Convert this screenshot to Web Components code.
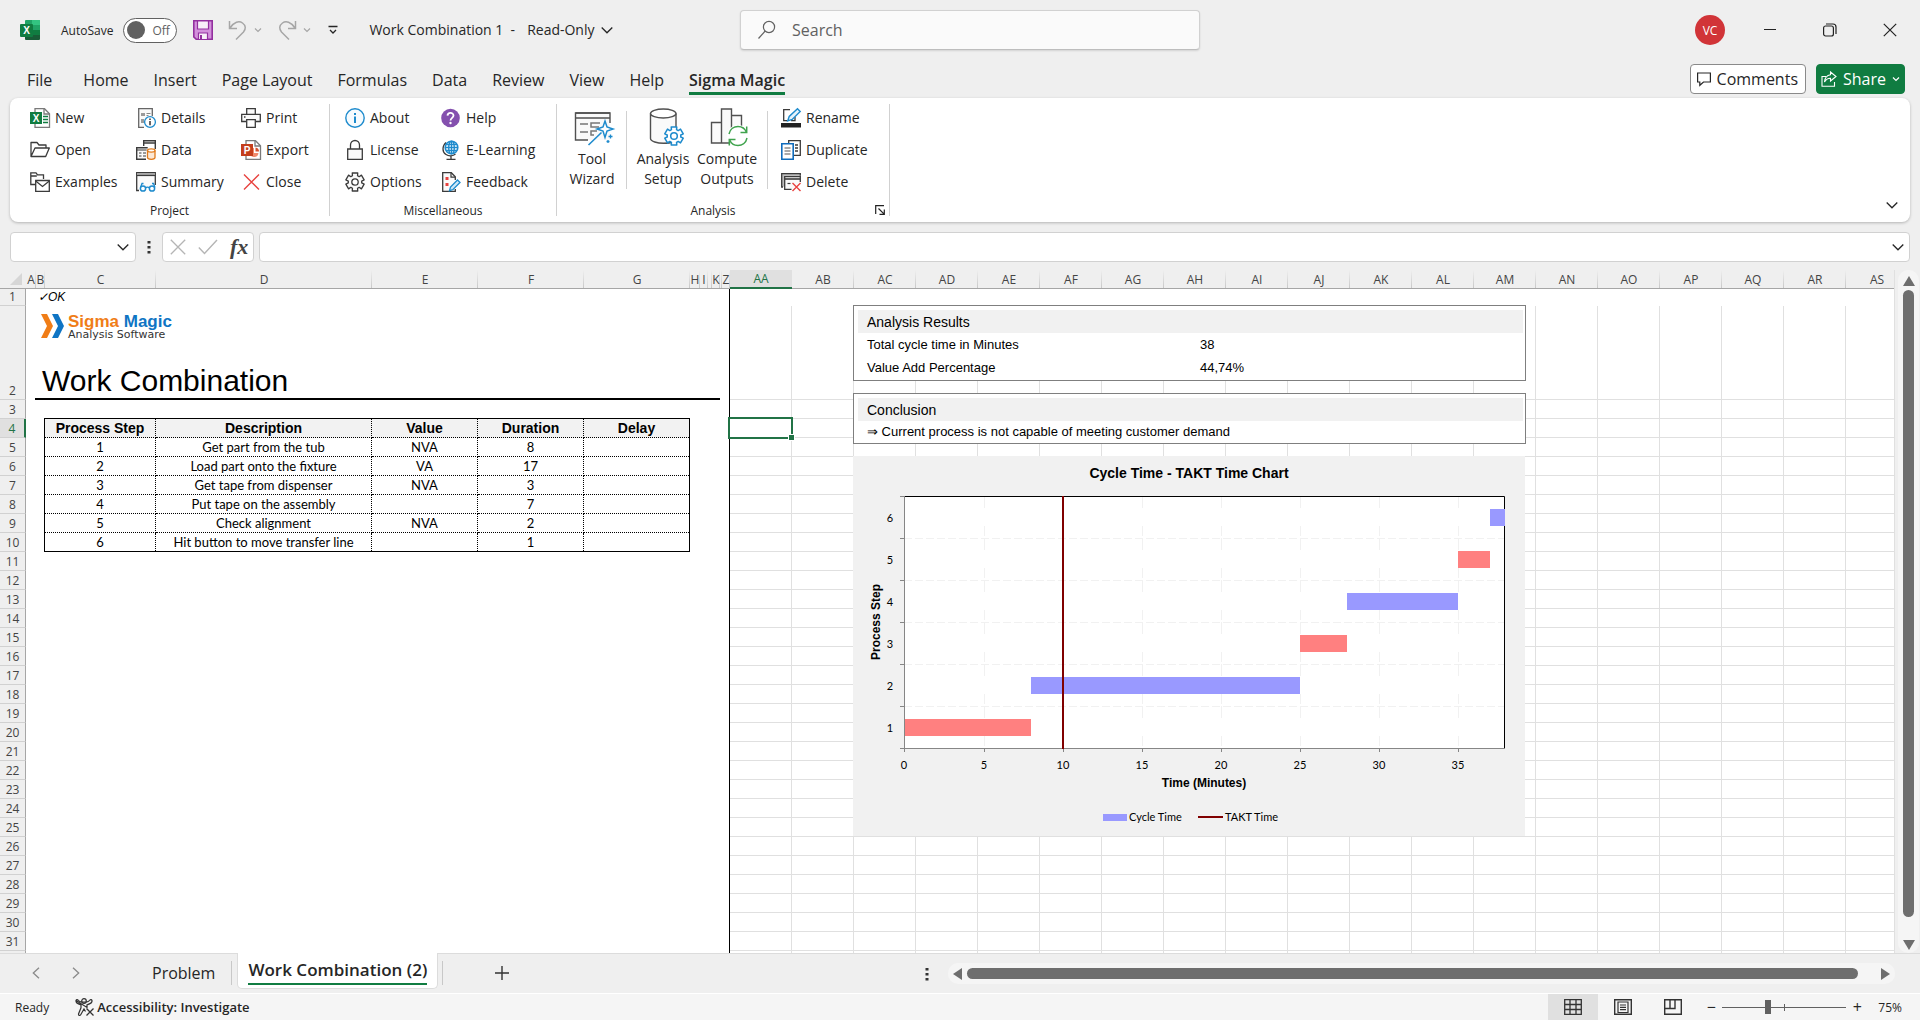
<!DOCTYPE html>
<html lang="en">
<head>
<meta charset="utf-8">
<title>Work Combination 1 - Read-Only</title>
<style>
    :root {
        --font-ui: "Open Sans", "Noto Sans", sans-serif;
        --font-cell: Lato, "Open Sans", sans-serif;
        --font-report: "Liberation Sans", Arial, sans-serif;
        --color-text: #262626;
        --color-muted: #616161;
        --color-line: #d1d1d1;
        --color-grid: #e0e0e0;
        --color-chrome: #efefef;
        --color-green: #107c41;
        --color-select: #217346;
    }

    body {
        margin: 0;
        display: grid;
        grid-template-rows: auto auto auto auto minmax(0, 1fr) auto auto;
        height: 100vh;
        background: var(--color-chrome);
        color: var(--color-text);
        font-family: var(--font-ui);
        font-size: 14px;
    }
</style>
</head>
<body>
<title-bar></title-bar>
<ribbon-tabs active="Sigma Magic"></ribbon-tabs>
<ribbon-bar></ribbon-bar>
<formula-bar></formula-bar>
<work-sheet></work-sheet>
<sheet-tabs></sheet-tabs>
<status-bar></status-bar>

<script>
// Shared reset for the controls, repeated in each shadow root that has buttons
const controls = `
    button, input {
        font: inherit;
        color: inherit;
        margin: 0;
        padding: 0;
        border: 0;
        background: none;
        outline: none;
    }
    button { display: flex; align-items: center; justify-content: center; }
`;

class BaseElement extends HTMLElement {
  constructor() {
    super();
    this.attachShadow({ mode: "open" });
  }

  connectedCallback() {
    const template = document.createElement("template");
    template.innerHTML = this.render();
    this.shadowRoot.replaceChildren(template.content.cloneNode(true));
  }
}

const INK = "#3b3b3b";
const BLUE = "#1e8bcd";

const gear = (cx, cy, r) => {
  const points = [];
  for (let i = 0; i < 6; i++) {
    [[-17, 1], [17, 1], [22, 0.72], [38, 0.72]].forEach(([deg, k]) => {
      const a = ((i * 60 + deg - 90) * Math.PI) / 180;
      points.push(`${(cx + r * k * Math.cos(a)).toFixed(2)} ${(cy + r * k * Math.sin(a)).toFixed(2)}`);
    });
  }
  return `M${points.join("L")}Z`;
};

// name: [width, height, markup]
const icons = {
  excel: [20, 20, `<path d="M6 0h13a1 1 0 0 1 1 1v5H5V1a1 1 0 0 1 1-1z" fill="#21a366"/><path d="M12 0h7a1 1 0 0 1 1 1v4h-8z" fill="#33c481"/><path d="M5 5h7v10H5z" fill="#185c37"/><path d="M12 5h8v5h-8z" fill="#21a366"/><path d="M12 10h8v5h-8z" fill="#107c41"/><path d="M5 15h15v4a1 1 0 0 1-1 1H6a1 1 0 0 1-1-1z" fill="#185c37"/><rect y="4" width="13" height="13" rx="1" fill="#107c41"/><text x="6.5" y="14" font-size="10" font-weight="700" text-anchor="middle" fill="#fff">X</text>`],
  save: [20, 20, `<path d="M.8.8h18.4v18.4H3.2L.8 16.8z" fill="#d391dc" stroke="#93309f" stroke-width="1.6"/><path d="M4.5 1h11v8h-11z" fill="#f8f0f9" stroke="#93309f" stroke-width="1.2"/><path d="M5.5 19v-6h9v6" fill="#f8f0f9" stroke="#93309f" stroke-width="1.2"/><path d="M8 15v4" stroke="#93309f" stroke-width="2"/>`],
  undo: [20, 20, `<path d="M1.500 1v7.500h7.500M2 8C6 2 11 .5 14.500 3c3.500 2.500 3.500 6 1 9L8 19.500" fill="none" stroke="#a6a6a6" stroke-width="1.500"/>`],
  redo: [20, 20, `<path d="M18.500 1v7.500H11M18 8C14 2 9 .5 5.500 3 2 5.500 2 9 4.500 12l7.500 7.500" fill="none" stroke="#a6a6a6" stroke-width="1.500"/>`],
  chevronSmall: [8, 8, `<path d="M1 2.500l3 3 3-3" fill="none" stroke="currentColor" stroke-width="1.200"/>`],
  chevron: [12, 12, `<path d="M.7 3.500L6 8.800l5.300-5.300" fill="none" stroke="currentColor" stroke-width="1.300"/>`],
  customize: [10, 10, `<path d="M.5 1.500h9M2 5l3 3 3-3" fill="none" stroke="currentColor" stroke-width="1.300"/>`],
  search: [20, 20, `<circle cx="12" cy="7" r="5.600" fill="none" stroke="#616161" stroke-width="1.200"/><path d="M8.200 11L1.500 18.500" stroke="#616161" stroke-width="1.200"/>`],
  minimize: [12, 12, `<path d="M0 5.500h12" stroke="#222" stroke-width="1"/>`],
  restore: [14, 14, `<rect x=".6" y="3" width="9.800" height="10" rx="2" fill="none" stroke="#222" stroke-width="1.200"/><path d="M3 1h7a3 3 0 0 1 3 3v7" fill="none" stroke="#222" stroke-width="1.200"/>`],
  close: [14, 14, `<path d="M.8.8l12.400 12.400M13.200.8L.8 13.200" stroke="#222" stroke-width="1.200"/>`],
  comment: [14, 14, `<path d="M.6 1h12.800v9H6.500L2.800 13.300V10H.6z" fill="none" stroke="#262626" stroke-width="1.200"/>`],
  share: [16, 16, `<path d="M5 5.500H1v9.800h12.500V11" fill="none" stroke="#fff" stroke-width="1.100"/><path d="M9.500 1l5.500 4.500L9.500 10V7.300C6.500 7.200 5 8.500 3.500 11c.3-4.500 2.700-6.800 6-7.300z" fill="none" stroke="#fff" stroke-width="1.100"/>`],
  new: [20, 20, `<path d="M5 .7h9.500l5 5v13.600H5z" fill="#fff" stroke="#7a7a7a" stroke-width="1.300"/><path d="M14 1v5h5" fill="none" stroke="#7a7a7a" stroke-width="1.300"/><path d="M13 8.500h5M13 11.500h5M13 14.500h5" stroke="#107c41" stroke-width="1.500"/><rect y="4" width="12" height="12" fill="#107c41"/><text x="6" y="13.500" font-size="10" font-weight="700" text-anchor="middle" fill="#fff">X</text>`],
  open: [20, 20, `<path d="M1 16.500V2.500h6l2 2.500h7v3M1 16.500L5 8h14.300l-3.600 8.500z" fill="none" stroke="${INK}" stroke-width="1.300" stroke-linejoin="round"/>`],
  examples: [20, 20, `<path d="M6 12.500H.8V.8H6l1.500 2h6V7M.8 4h6" fill="none" stroke="${INK}" stroke-width="1.300"/><path d="M5.700 8.500h13.600v10.800H5.700z" fill="#fff" stroke="${INK}" stroke-width="1.300"/><path d="M5.700 9l6.800 5.500L19.300 9" fill="none" stroke="${INK}" stroke-width="1.300"/>`],
  details: [20, 20, `<path d="M8 19.300H2.700V.7h13.600V8" fill="#fafafa" stroke="#666" stroke-width="1.300"/><path d="M5 5h4v3H5zM5 11h3v4H5z" fill="#9a9a9a"/><path d="M10.500 5.500h4M10.500 7.500h2" stroke="#888"/><circle cx="14" cy="14" r="5.400" fill="#fff" stroke="${BLUE}" stroke-width="1.300"/><path d="M14 13v4.200M14 10.600v1.400" stroke="#333" stroke-width="1.500"/>`],
  data: [20, 20, `<path d="M7.700 6V.7h11.600V9M7.700 3h11.600" fill="none" stroke="${INK}" stroke-width="1.400"/><path d="M10 19.300H.7V7.700h11" fill="#fafafa" stroke="${INK}" stroke-width="1.400"/><path d="M.7 10h10M3 13h2.500M3 16h2.500M7 13h3M7 16h3" stroke="${INK}" stroke-width="1.200"/><path d="M11.500 10.500v7c0 2.400 7.500 2.400 7.500 0v-7" fill="#fce8d6" stroke="#e07b1c" stroke-width="1.300"/><ellipse cx="15.250" cy="10.500" rx="3.750" ry="1.600" fill="#fff" stroke="#e07b1c" stroke-width="1.300"/>`],
  summary: [20, 20, `<path d="M3 18.500H.7V.7h18.600V13" fill="#fafafa" stroke="${INK}" stroke-width="1.300"/><path d="M1.300 2h17.400" stroke="#a8a8a8" stroke-width="2"/><path d="M.7 3.500h18.600" stroke="${INK}" stroke-width="1.200"/><path d="M4.500 15.500l1.500-4h1.500M19 15.500l-1.500-4H16M9.500 16c1-1 3-1 4 0" fill="none" stroke="${BLUE}" stroke-width="1.300"/><circle cx="7" cy="16.500" r="2.600" fill="#fff" stroke="${BLUE}" stroke-width="1.500"/><circle cx="16" cy="16.500" r="2.600" fill="#fff" stroke="${BLUE}" stroke-width="1.500"/>`],
  print: [20, 20, `<path d="M5.700 6V.7h8.600V6M5 13.500H.7V6.300h18.600v7.200H15" fill="#fafafa" stroke="${INK}" stroke-width="1.300"/><path d="M3 9h1.500" stroke="${INK}" stroke-width="1.300"/><path d="M5.700 11.700h8.600v7.600H5.700z" fill="#fff" stroke="${INK}" stroke-width="1.300"/>`],
  export: [20, 20, `<path d="M5 .7h9.500l5 5v13.600H5z" fill="#fff" stroke="#7a7a7a" stroke-width="1.300"/><path d="M14 1v5h5" fill="none" stroke="#7a7a7a" stroke-width="1.300"/><path d="M13 8a4.500 4.500 0 1 0 4.500 5H13z" fill="#f08a6c"/><path d="M14.500 7.500v4h3.500a4 4 0 0 0-3.500-4z" fill="#d35230"/><rect y="4" width="12" height="12" fill="#c43e1c"/><text x="6" y="13.500" font-size="10" font-weight="700" text-anchor="middle" fill="#fff">P</text>`],
  cross: [20, 20, `<path d="M3 2.500l15 15M18 2.500l-15 15" stroke="#e8423f" stroke-width="1.400"/>`],
  about: [20, 20, `<circle cx="10" cy="10" r="9.200" fill="#f6fbfe" stroke="${BLUE}" stroke-width="1.400"/><path d="M10 8.500v6.500M10 5v2" stroke="${BLUE}" stroke-width="2"/>`],
  help: [20, 20, `<circle cx="9.500" cy="10" r="9.300" fill="#8450ae"/><path d="M6.500 7.600c.2-3.600 6-3.600 6 0 0 2.200-3 2.400-3 5" fill="none" stroke="#fff" stroke-width="1.800"/><circle cx="9.500" cy="15" r="1.200" fill="#fff"/>`],
  license: [20, 20, `<path d="M5.500 9V5a4.500 4.500 0 0 1 9 0v4" fill="none" stroke="${INK}" stroke-width="1.300"/><path d="M2.700 9h14.600v10.300H2.700z" fill="#fafafa" stroke="${INK}" stroke-width="1.300"/>`],
  learning: [20, 20, `<path d="M5 2.500C1 6 1 12 5 14.500c3 2 7 1.500 9.500-.5M10 16v3M5.500 19.300h9" fill="none" stroke="${INK}" stroke-width="1.300"/><circle cx="10.500" cy="7.500" r="6.300" fill="#fff" stroke="${BLUE}" stroke-width="1.600"/><ellipse cx="10.500" cy="7.500" rx="2.800" ry="6.300" fill="none" stroke="${BLUE}" stroke-width="1.400"/><path d="M4.200 7.500h12.600M5 4.500h11M5 10.500h11M10.500 1v13" stroke="${BLUE}" stroke-width="1.300"/>`],
  options: [20, 20, `<path d="${gear(10, 10, 9.4)}" fill="#fafafa" stroke="${INK}" stroke-width="1.300" stroke-linejoin="round"/><circle cx="10" cy="10" r="3.200" fill="#fff" stroke="${INK}" stroke-width="1.300"/>`],
  feedback: [20, 20, `<path d="M14.300 17v2.300H1.700V.7h8.600l4 4V8" fill="#fafafa" stroke="${INK}" stroke-width="1.300"/><path d="M10 .7v4.500h4" fill="none" stroke="${INK}" stroke-width="1.200"/><path d="M4.500 5h3v3h-3zM4.500 11h3v3h-3z" fill="#e8423f"/><path d="M16.500 8l2.500 2.500-7 7-3.500 1.200 1-3.700z" fill="#cfe8f8" stroke="${BLUE}" stroke-width="1.300"/>`],
  rename: [20, 20, `<path d="M9 1.700H2.700v11h3.500M14 9v3.700h-4" fill="none" stroke="${INK}" stroke-width="1.300"/><path d="M16.500.8l2.700 2.700-8 8-4.500 1.500 1.500-4.500z" fill="#e6f3fb" stroke="${BLUE}" stroke-width="1.400"/><path d="M0 15h20v4.500H0z" fill="#222"/>`],
  duplicate: [20, 20, `<path d="M7.700 3V.7h11.600v14.600H13M14 5h3M14 8h3M14 11h3" fill="none" stroke="${INK}" stroke-width="1.300"/><path d="M.8 3.700h11.400v15.500H.8z" fill="#fff" stroke="#0f6cbd" stroke-width="1.600"/><path d="M3.500 8h6M3.500 11h6M3.500 14h6" stroke="#555" stroke-width="1.200"/>`],
  delete: [20, 20, `<path d="M2 15H.7V1.700h18.600v2" fill="#bdbdbd" stroke="${INK}" stroke-width="1.300"/><path d="M10.500 17.300H3.700V4.700h15.600V10" fill="#fafafa" stroke="${INK}" stroke-width="1.300"/><path d="M4 7h15" stroke="${INK}" stroke-width="1.600"/><path d="M6.500 11.500h3" stroke="${INK}" stroke-width="1.200"/><path d="M11.500 11l8 8M19.500 11l-8 8" stroke="#e8423f" stroke-width="1.400"/>`],
  wizard: [40, 40, `<path d="M3.500 7h34.500v27H3.500z" fill="#fafafa"/><path d="M16 34H3.500V7H38v10" fill="none" stroke="#505050" stroke-width="1.400"/><path d="M3.500 12H38M3.500 7H38" stroke="#505050" stroke-width="1.400"/><path d="M8 18h8M8 26h8" stroke="#777" stroke-width="1.500"/><path d="M28 17h-9v4h8M25 25h-6v4h3" fill="none" stroke="#777" stroke-width="1.500"/><path d="M29.500 26.500L16.500 39" stroke="${BLUE}" stroke-width="1.600"/><path d="M33 15l2 6 6 2-6 2-2 6.500-2-6.500-6-2 6-2z" fill="#fff" stroke="${BLUE}" stroke-width="1.500"/><path d="M38.500 28.500v4M36.500 30.500h4M36 34v3M34.500 35.500h3" stroke="${BLUE}" stroke-width="1.300"/>`],
  setup: [40, 40, `<path d="M7.500 7.500v25c0 3 7 4.800 13 4.800 8 0 12.500-2 12.500-4.800v-25" fill="#fafafa" stroke="#505050" stroke-width="1.400"/><ellipse cx="20.250" cy="7.500" rx="12.750" ry="4.500" fill="#fff" stroke="#505050" stroke-width="1.400"/><path d="${gear(31, 30, 9.5)}" fill="#fff" stroke="${BLUE}" stroke-width="1.500" stroke-linejoin="round"/><circle cx="31" cy="30" r="3.300" fill="none" stroke="${BLUE}" stroke-width="1.500"/>`],
  compute: [40, 40, `<path d="M4.500 16.500h10v20.500h-10zM24.500 9.500h10V37h-10zM14.500 3h10v34h-10z" fill="#fafafa" stroke="#505050" stroke-width="1.400"/><circle cx="31" cy="30" r="11" fill="#fff"/><path d="M22 28c1-5 5-7.500 9-7.500 3.500 0 7 2 8.500 6M40 32c-1 5-5 7.500-9 7.500-3.500 0-7-2-8.500-6" fill="none" stroke="#3fa34d" stroke-width="1.500"/><path d="M39.700 20.500v6H33.500M22.300 39.500v-6h6.200" fill="none" stroke="#3fa34d" stroke-width="1.500"/>`],
  launcher: [10, 10, `<path d="M.7 9V.7H9M3.500 3.500l5.200 5.200M9.300 4.500v4.800H4.500" fill="none" stroke="#222" stroke-width="1.200"/>`],
  dots: [4, 14, `<path d="M.5 1h3v2.500h-3zM.5 6h3v2.500h-3zM.5 11h3v2.500h-3z" fill="#333"/>`],
  cancel: [16, 16, `<path d="M.8.8l14.400 14.400M15.200.8L.8 15.200" stroke="#b5b5b5" stroke-width="1.300"/>`],
  accept: [20, 16, `<path d="M.8 8.500l5.700 6L19 1" fill="none" stroke="#b5b5b5" stroke-width="1.400"/>`],
  prev: [8, 12, `<path d="M7 .7L1.300 6 7 11.300" fill="none" stroke="#8a8a8a" stroke-width="1.300"/>`],
  next: [8, 12, `<path d="M1 .7L6.700 6 1 11.300" fill="none" stroke="#8a8a8a" stroke-width="1.300"/>`],
  plus: [14, 14, `<path d="M0 7h14M7 0v14" stroke="#333" stroke-width="1.400"/>`],
  up: [12, 10, `<path d="M6 0l6 10H0z" fill="#6e6e6e"/>`],
  down: [12, 10, `<path d="M6 10L0 0h12z" fill="#6e6e6e"/>`],
  left: [10, 12, `<path d="M0 6l9-6v12z" fill="#6e6e6e"/>`],
  right: [10, 12, `<path d="M10 6L1 0v12z" fill="#6e6e6e"/>`],
  access: [20, 18, `<circle cx="9" cy="3" r="2.300" fill="none" stroke="#333" stroke-width="1.200"/><path d="M1 2.500C.5 5 3 6 6 6.800v3L3.500 16c-.3 1.500 1.500 2 2.200.8L9 11l1.500 2.500M12 9.500V6.800C15 6 17.500 5 17 2.500c-.5-1.500-2-.8-2.500 0C13 4.700 5 4.700 3.500 2.500 3 1.700 1.500 1 1 2.500z" fill="none" stroke="#333" stroke-width="1.200"/><path d="M11.500 10.500l7 7M18.500 10.500l-7 7" stroke="#333" stroke-width="1.300"/>`],
  viewNormal: [18, 16, `<path d="M.7.7h16.600v14.600H.7zM.7 5.500h16.600M.7 10.500h16.600M6 .7v14.600M12 .7v14.600" fill="none" stroke="#333" stroke-width="1.300"/>`],
  viewLayout: [18, 16, `<path d="M.7.7h16.600v14.600H.7z" fill="none" stroke="#333" stroke-width="1.400"/><path d="M4 3h10v10.500H4zM6 6h6M6 8.300h6M6 10.600h6" fill="none" stroke="#333" stroke-width="1.200"/>`],
  viewBreak: [18, 16, `<path d="M.7.7h16.600v14.600H.7z" fill="none" stroke="#333" stroke-width="1.400"/><path d="M1 9.500h10V1M6 1v8" fill="none" stroke="#333" stroke-width="1.400"/>`],
  arrows: [24, 24, `<path d="M0 0h6l6 12-6 12H0l6-12z" fill="#f07d17"/><path d="M11 0h6l6 12-6 12h-6l6-12z" fill="#0f75c4"/>`],
  corner: [12, 12, `<path d="M12 0v12H0z" fill="#d6d6d6"/>`],
};

class UiIcon extends BaseElement {
  render() {
    const [width, height, body] = icons[this.getAttribute("name")];
    return `
      <style>
          :host { display: inline-flex; flex: none; }
          svg { display: block; overflow: visible; font-family: var(--font-report); }
      </style>
      <svg width="${width}" height="${height}" viewBox="0 0 ${width} ${height}" aria-hidden="true">${body}</svg>`;
  }
}

class TitleBar extends BaseElement {
  render() {
    return `
      <style>
          ${controls}
          :host {
              display: grid;
              grid-template-columns: 740fr 460fr 720fr;
              align-items: center;
              height: 60px;
          }
          .left, .right { display: flex; align-items: center; white-space: nowrap; }
          .left { padding-left: 20px; }
          .right { justify-content: flex-end; }
          .autosave { display: flex; align-items: center; gap: 10px; margin: 0 16px 0 21px; font-size: 12px; }
          .pill {
              display: flex;
              align-items: center;
              gap: 7px;
              box-sizing: border-box;
              width: 54px;
              height: 25px;
              padding-left: 3px;
              border: 1px solid var(--color-muted);
              border-radius: 13px;
              background: #fff;
              color: var(--color-muted);
          }
          .pill input { appearance: none; width: 18px; height: 18px; border-radius: 50%; background: #616161; }
          .history { display: flex; gap: 6px; color: #a6a6a6; margin-left: 15px; }
          .history .step { width: 20px; }
          .customize { margin: 0 31px 0 17px; }
          .title { font-size: 14px; line-height: 20px; }
          .mode { gap: 6px; margin-left: 12px; }
          .search {
              display: flex;
              align-items: center;
              gap: 15px;
              box-sizing: border-box;
              height: 40px;
              padding: 0 16px;
              border: 1px solid var(--color-line);
              border-bottom-color: #bdbdbd;
              border-radius: 4px;
              background: #fafafa;
              box-shadow: 0 1px 2px #0000001f;
          }
          .search input { flex: 1; min-width: 0; font-size: 16px; }
          .search input::placeholder { color: var(--color-muted); opacity: 1; }
          .avatar {
              width: 30px;
              height: 30px;
              margin-right: 15px;
              border-radius: 50%;
              background: #d13438;
              color: #fff;
              font-size: 12px;
          }
          .window { width: 60px; height: 40px; }
      </style>
      <div class="left">
          <ui-icon name="excel"></ui-icon>
          <label class="autosave">AutoSave
              <span class="pill"><input type="checkbox" role="switch">Off</span>
          </label>
          <button aria-label="Save"><ui-icon name="save"></ui-icon></button>
          <span class="history">
              <button class="step" aria-label="Undo"><ui-icon name="undo"></ui-icon></button>
              <button aria-label="Undo list"><ui-icon name="chevronSmall"></ui-icon></button>
          </span>
          <span class="history">
              <button class="step" aria-label="Redo"><ui-icon name="redo"></ui-icon></button>
              <button aria-label="Redo list"><ui-icon name="chevronSmall"></ui-icon></button>
          </span>
          <button class="customize" aria-label="Customize toolbar"><ui-icon name="customize"></ui-icon></button>
          <span class="title">Work Combination 1&nbsp; -</span>
          <button class="mode title">Read-Only <ui-icon name="chevron"></ui-icon></button>
      </div>
      <label class="search">
          <ui-icon name="search"></ui-icon>
          <input type="text" placeholder="Search" aria-label="Search">
      </label>
      <div class="right">
          <button class="avatar">VC</button>
          <button class="window" aria-label="Minimize"><ui-icon name="minimize"></ui-icon></button>
          <button class="window" aria-label="Restore"><ui-icon name="restore"></ui-icon></button>
          <button class="window" aria-label="Close"><ui-icon name="close"></ui-icon></button>
      </div>`;
  }
}

class RibbonTabs extends BaseElement {
  render() {
    const names = ["File", "Home", "Insert", "Page Layout", "Formulas", "Data", "Review", "View", "Help", "Sigma Magic"];
    const active = this.getAttribute("active");
    return `
      <style>
          ${controls}
          :host { display: flex; justify-content: space-between; height: 38px; padding: 0 15px 0 27px; font-size: 16px; }
          nav { display: flex; gap: 25px; align-items: flex-start; padding-top: 8px; white-space: nowrap; }
          nav button { line-height: 24px; border-bottom: 3px solid transparent; }
          nav button:first-child { margin-right: 6px; }
          nav .active { font-weight: 600; border-color: var(--color-green); }
          .actions { display: flex; gap: 10px; padding-top: 4px; }
          .actions button {
              box-sizing: border-box;
              height: 30px;
              gap: 6px;
              padding: 0 7px 0 6px;
              border: 1px solid #8a8a8a;
              border-radius: 4px;
              background: #fff;
          }
          .actions .share { border-color: var(--color-green); background: var(--color-green); color: #fff; padding: 0 4px; }
      </style>
      <nav>${names.map((name) => `<button class="${name === active ? "active" : ""}">${name}</button>`).join("")}</nav>
      <div class="actions">
          <button><ui-icon name="comment"></ui-icon>Comments</button>
          <button class="share"><ui-icon name="share"></ui-icon>Share <ui-icon name="chevronSmall"></ui-icon></button>
      </div>`;
  }
}

class RibbonButton extends BaseElement {
  render() {
    return `
      <style>
          ${controls}
          :host { display: block; }
          button { gap: 5px; height: 28px; padding: 0 4px; line-height: 20px; white-space: nowrap; }
          :host([large]) button { flex-direction: column; gap: 3px; width: 100%; height: auto; padding: 2px 0 0; }
      </style>
      <button><ui-icon name="${this.getAttribute("icon")}"></ui-icon><span><slot></slot></span></button>`;
  }
}

class RibbonGroup extends BaseElement {
  render() {
    return `
      <style>
          :host { display: flex; }
          .group { display: flex; flex-direction: column; flex: 1; }
          .label { margin-top: 5px; font-size: 12px; line-height: 20px; text-align: center; }
          :host([launcher]) .label { padding-right: 20px; }
          .content { height: 92px; }
          .rule { width: 1px; height: 112px; background: var(--color-line); }
      </style>
      <div class="group">
          <div class="content"><slot></slot></div>
          <div class="label">${this.getAttribute("label")}</div>
      </div>
      <div class="rule"></div>`;
  }
}

class RibbonBar extends BaseElement {
  render() {
    return `
      <style>
          ${controls}
          :host {
              display: flex;
              box-sizing: border-box;
              height: 124px;
              margin: 0 10px;
              padding-top: 6px;
              border-radius: 8px;
              background: #fff;
              box-shadow: 0 1px 3px #00000040;
          }
          .grid { display: grid; grid-auto-flow: column; grid-template-rows: repeat(3, 28px); row-gap: 4px; justify-content: start; }
          .project { width: 320px; }
          .project .grid { padding-left: 16px; grid-template-columns: 106px 105px auto; }
          .misc { width: 227px; }
          .misc .grid { padding-left: 11px; grid-template-columns: 96px auto; }
          .analysis { width: 333px; }
          .row { display: flex; padding-left: 7px; }
          .split { width: 1px; height: 78px; margin: 7px 6px 0; background: var(--color-line); }
          .tool { width: 56px; }
          .setup { width: 60px; }
          .compute { width: 68px; }
          .row .grid { padding-left: 3px; }
          .corner { align-self: flex-end; margin: 0 4px 7px -15px; }
          .collapse { margin: 0 12px 11px auto; align-self: flex-end; }
      </style>
      <ribbon-group class="project" label="Project"><div class="grid">
          <ribbon-button icon="new">New</ribbon-button>
          <ribbon-button icon="open">Open</ribbon-button>
          <ribbon-button icon="examples">Examples</ribbon-button>
          <ribbon-button icon="details">Details</ribbon-button>
          <ribbon-button icon="data">Data</ribbon-button>
          <ribbon-button icon="summary">Summary</ribbon-button>
          <ribbon-button icon="print">Print</ribbon-button>
          <ribbon-button icon="export">Export</ribbon-button>
          <ribbon-button icon="cross">Close</ribbon-button>
      </div></ribbon-group>
      <ribbon-group class="misc" label="Miscellaneous"><div class="grid">
          <ribbon-button icon="about">About</ribbon-button>
          <ribbon-button icon="license">License</ribbon-button>
          <ribbon-button icon="options">Options</ribbon-button>
          <ribbon-button icon="help">Help</ribbon-button>
          <ribbon-button icon="learning">E-Learning</ribbon-button>
          <ribbon-button icon="feedback">Feedback</ribbon-button>
      </div></ribbon-group>
      <ribbon-group class="analysis" label="Analysis" launcher><div class="row">
          <ribbon-button class="tool" large icon="wizard">Tool<br>Wizard</ribbon-button>
          <div class="split"></div>
          <ribbon-button class="setup" large icon="setup">Analysis<br>Setup</ribbon-button>
          <ribbon-button class="compute" large icon="compute">Compute<br>Outputs</ribbon-button>
          <div class="split"></div>
          <div class="grid">
              <ribbon-button icon="rename">Rename</ribbon-button>
              <ribbon-button icon="duplicate">Duplicate</ribbon-button>
              <ribbon-button icon="delete">Delete</ribbon-button>
          </div>
      </div></ribbon-group>
      <button class="corner" aria-label="Analysis options"><ui-icon name="launcher"></ui-icon></button>
      <button class="collapse" aria-label="Collapse ribbon"><ui-icon name="chevron"></ui-icon></button>`;
  }
}

class FormulaBar extends BaseElement {
  render() {
    return `
      <style>
          ${controls}
          :host { display: flex; align-items: center; height: 30px; padding: 10px 10px 8px; }
          .box {
              display: flex;
              align-items: center;
              box-sizing: border-box;
              height: 30px;
              border: 1px solid var(--color-line);
              border-radius: 4px;
              background: #fff;
          }
          .box input { flex: 1; min-width: 0; padding-left: 6px; }
          .name { width: 126px; padding-right: 6px; }
          .dots { margin: 0 11px; }
          .tools { width: 92px; gap: 12px; padding-left: 7px; margin-right: 5px; }
          .formula { flex: 1; padding-right: 5px; }
          .fx { font-family: "Liberation Serif", serif; font-style: italic; font-weight: 700; font-size: 22px; line-height: 24px; color: #444; }
      </style>
      <div class="box name">
          <input type="text" aria-label="Name box">
          <button aria-label="Names"><ui-icon name="chevron"></ui-icon></button>
      </div>
      <ui-icon class="dots" name="dots"></ui-icon>
      <div class="box tools">
          <button aria-label="Cancel"><ui-icon name="cancel"></ui-icon></button>
          <button aria-label="Enter"><ui-icon name="accept"></ui-icon></button>
          <button class="fx">fx</button>
      </div>
      <div class="box formula">
          <input type="text" aria-label="Formula">
          <button aria-label="Expand formula bar"><ui-icon name="chevron"></ui-icon></button>
      </div>`;
  }
}

class ProcessTable extends BaseElement {
  render() {
    const rows = [
      ["1", "Get part from the tub", "NVA", "8", ""],
      ["2", "Load part onto the fixture", "VA", "17", ""],
      ["3", "Get tape from dispenser", "NVA", "3", ""],
      ["4", "Put tape on the assembly", "", "7", ""],
      ["5", "Check alignment", "NVA", "2", ""],
      ["6", "Hit button to move transfer line", "", "1", ""],
    ];
    return `
      <style>
          :host { display: block; }
          table {
              width: 646px;
              table-layout: fixed;
              border-collapse: collapse;
              border: 1px solid #000;
              font-family: var(--font-cell);
              font-size: 13px;
              line-height: 18px;
              text-align: center;
              color: #000;
          }
          th, td { height: 18px; padding: 0; border: 1px dotted #000; white-space: nowrap; }
          th { background: #f2f2f2; font-family: var(--font-report); font-size: 14px; }
          tr > :first-child { border-left: 1px solid #000; }
          tr > :last-child { border-right: 1px solid #000; }
      </style>
      <table>
          <colgroup><col style="width: 111px"><col style="width: 216px"><col span="3"></colgroup>
          <thead><tr><th>Process Step</th><th>Description</th><th>Value</th><th>Duration</th><th>Delay</th></tr></thead>
          <tbody>${rows.map((row) => `<tr>${row.map((cell) => `<td>${cell}</td>`).join("")}</tr>`).join("")}</tbody>
      </table>`;
  }
}

class ResultCard extends BaseElement {
  render() {
    return `
      <style>
          :host {
              display: block;
              padding: 4px 2px 1px 4px;
              border: 1px solid #7f7f7f;
              background: #fff;
              font-family: var(--font-report);
              font-size: 13px;
              line-height: 21px;
              color: #000;
          }
          h2 { margin: 0; padding: 2px 0 0 9px; background: #f1f1f1; font-size: 14px; font-weight: 400; line-height: 21px; }
          .body { padding-left: 9px; }
      </style>
      <h2>${this.getAttribute("heading")}</h2>
      <div class="body"><slot></slot></div>`;
  }
}

class TaktChart extends BaseElement {
  render() {
    const steps = [[0, 8], [8, 17], [25, 3], [28, 7], [35, 2], [37, 1]];
    const takt = 10;
    const left = 51;
    const top = 40;
    const width = 601;
    const height = 252;
    const band = height / steps.length;
    const x = (minutes) => Math.ceil(left + (minutes * width) / 38);
    const ticks = [0, 5, 10, 15, 20, 25, 30, 35];
    const bottom = top + height;

    const bars = steps.map(([start, length], i) => {
      const y = bottom - band * (i + 1) + 13;
      return `<rect x="${x(start)}" y="${y}" width="${x(start + length) - x(start)}" height="17" fill="${i % 2 ? "#9999ff" : "#ff8080"}"/>`;
    });
    const rows = steps.map((_, i) => {
      const y = top + band * i;
      const rule = i ? `<path class="dash" d="M${left} ${y + 0.5}h${width}"/>` : "";
      return `${rule}<path class="axis" d="M${left - 4} ${y + 0.5}h4"/>
        <text x="37" y="${y + 26}">${steps.length - i}</text>`;
    });
    const columns = ticks.map((tick) => {
      const rule = tick && tick !== takt ? `<path class="column" d="M${x(tick) + 0.5} ${top}v${height}"/>` : "";
      return `${rule}<path class="axis" d="M${x(tick) + 0.5} ${bottom}v4"/>
        <text x="${x(tick)}" y="313">${tick}</text>`;
    });

    return `
      <style>
          :host { display: block; width: 672px; background: #f1f1f1; }
          svg { display: block; width: 100%; font-family: var(--font-cell); font-size: 11px; text-anchor: middle; fill: #000; }
          .title { font: bold 14px var(--font-report); }
          .caption { font: bold 12px var(--font-report); }
          .legend { text-anchor: start; }
          .axis { stroke: #868686; fill: none; }
          .dash { stroke: #f1f1f1; stroke-dasharray: 8 3; }
          .column { stroke: #f1f1f1; stroke-dasharray: 12 18 10 2; }
          .frame { stroke: #000; fill: none; }
          .takt { stroke: #800000; stroke-width: 2; }
      </style>
      <svg viewBox="0 0 672 380" role="img" aria-label="Cycle Time - TAKT Time Chart">
          <rect x="${left}" y="${top}" width="${width}" height="${height}" fill="#fff"/>
          <text class="title" x="336" y="22">Cycle Time - TAKT Time Chart</text>
          ${columns.join("")}
          ${rows.join("")}
          <path class="frame" d="M${left} ${top + 0.5}h${width - 0.5}V${bottom}"/>
          ${bars.join("")}
          <path class="axis" d="M${left + 0.5} ${top}V${bottom + 0.5}H${left + width}M${left - 4} ${bottom + 0.5}h4"/>
          <path class="takt" d="M${x(takt)} ${top}v${height + 1}"/>
          <text class="caption" x="351" y="331">Time (Minutes)</text>
          <text class="caption" transform="translate(27 166) rotate(-90)">Process Step</text>
          <rect x="250" y="358" width="24" height="7" fill="#9999ff"/>
          <text class="legend" x="276" y="365">Cycle Time</text>
          <path class="takt" d="M345 361h25"/>
          <text class="legend" x="372" y="365">TAKT Time</text>
      </svg>`;
  }
}

class ScrollBar extends BaseElement {
  render() {
    const vertical = this.hasAttribute("vertical");
    return `
      <style>
          ${controls}
          :host { display: flex; align-items: center; gap: 4px; border-radius: 10px; background: #f5f5f5; padding: 0 5px; height: 21px; }
          :host([vertical]) { flex-direction: column; width: 21px; height: auto; padding: 6px 0 3px; }
          .track { flex: 1; display: flex; align-self: stretch; align-items: center; }
          .thumb { height: 11px; width: 98%; border-radius: 6px; background: #6e6e6e; }
          :host([vertical]) .track { align-items: flex-start; justify-content: center; }
          :host([vertical]) .thumb { width: 11px; height: 97%; }
      </style>
      <button aria-label="Back"><ui-icon name="${vertical ? "up" : "left"}"></ui-icon></button>
      <div class="track"><div class="thumb"></div></div>
      <button aria-label="Forward"><ui-icon name="${vertical ? "down" : "right"}"></ui-icon></button>`;
  }
}

class WorkSheet extends BaseElement {
  render() {
    const columns = [
      ["A", 10], ["B", 9], ["C", 111], ["D", 216], ["E", 106], ["F", 106], ["G", 106],
      ["H", 10], ["I", 8], ["", 4], ["K", 8], ["", 2], ["Z", 8],
    ];
    for (const letter of "ABCDEFGHIJKLMNOPQRS") columns.push([`A${letter}`, 62]);
    const rowHeight = { 1: 17, 2: 94 };
    const rows = Array.from({ length: 32 }, (_, i) => i + 1);

    return `
      <style>
          ${controls}
          :host { display: grid; grid-template-columns: minmax(0, 1fr) 21px; column-gap: 3px; min-height: 0; padding-right: 1px; }
          .sheet { display: grid; grid-template: 19px minmax(0, 1fr) / 26px 703px minmax(0, 1fr); overflow: hidden; background: #fff; border-right: 1px solid var(--color-grid); }
          .all { display: flex; align-items: center; justify-content: flex-end; padding-right: 4px; background: var(--color-chrome); border-bottom: 1px solid #a6a6a6; }
          .columns { grid-column: 2 / 4; display: flex; overflow: hidden; background: var(--color-chrome); font-size: 12px; color: #444; }
          .columns span {
              flex: none;
              display: flex;
              align-items: center;
              justify-content: center;
              box-sizing: border-box;
              border-bottom: 1px solid #a6a6a6;
              background: linear-gradient(#efefef, #c8c8c8) right / 1px 100% no-repeat;
          }
          .columns .on { background: #e0e0e0; color: var(--color-select); border-bottom: 2px solid var(--color-select); }
          .rows { overflow: hidden; background: var(--color-chrome); font-size: 12px; color: #444; }
          .rows div {
              display: flex;
              align-items: flex-end;
              justify-content: center;
              box-sizing: border-box;
              height: 19px;
              line-height: 16px;
              border-bottom: 1px solid var(--color-line);
              border-right: 1px solid #a6a6a6;
          }
          .rows .on { background: #e0e0e0; color: var(--color-select); border-right: 2px solid var(--color-select); }
          .report { color: #000; font-family: var(--font-report); overflow: hidden; }
          .state { padding-left: 12px; font-size: 12px; font-style: italic; line-height: 17px; }
          .brand { display: flex; align-items: center; gap: 3px; height: 32px; padding: 4px 0 0 15px; }
          .brand strong { display: block; font-size: 17px; line-height: 17px; color: #0f75c4; }
          .brand em { font-style: normal; color: #f07d17; }
          .brand small { display: block; font: 11px/9px "DejaVu Sans", sans-serif; color: #333; }
          h1 { margin: 22px 9px 0; padding: 0 7px; border-bottom: 2px solid #000; font-size: 30px; font-weight: 400; line-height: 34px; }
          process-table { margin: 18px 0 0 18px; }
          .canvas {
              position: relative;
              display: flex;
              flex-direction: column;
              gap: 12px;
              box-sizing: border-box;
              padding: 16px 0 0 123px;
              border-left: 1px solid #000;
              /* row 1 is blank, row 2 has column lines only */
              background:
                  linear-gradient(#fff, #fff) 0 0 / 100% 17px no-repeat,
                  repeating-linear-gradient(to right, transparent 0 61px, var(--color-grid) 61px 62px),
                  linear-gradient(#fff, #fff) 0 0 / 100% 110px no-repeat,
                  repeating-linear-gradient(to bottom, transparent 0 15px, var(--color-grid) 15px 16px, transparent 16px 19px);
          }
          result-card { box-sizing: border-box; width: 673px; }
          table { border-collapse: collapse; line-height: 23px; }
          th { width: 333px; padding: 0; font-weight: 400; text-align: left; }
          td { padding: 0; }
          .cell { position: absolute; left: -2px; top: 128px; width: 61px; height: 18px; border: 2px solid var(--color-select); }
          .cell::after { content: ""; position: absolute; right: -4px; bottom: -4px; width: 5px; height: 5px; border: 1px solid #fff; background: var(--color-select); }
      </style>
      <div class="sheet">
          <div class="all"><ui-icon name="corner"></ui-icon></div>
          <div class="columns">${columns.map(([name, width]) => `<span class="${name === "AA" ? "on" : ""}" style="width: ${width}px">${name}</span>`).join("")}</div>
          <div class="rows">${rows.map((n) => `<div class="${n === 4 ? "on" : ""}" style="height: ${rowHeight[n] || 19}px">${n < 32 ? n : ""}</div>`).join("")}</div>
          <div class="report">
              <div class="state">✓OK</div>
              <div class="brand">
                  <ui-icon name="arrows"></ui-icon>
                  <div><strong><em>Sigma</em> Magic</strong><small>Analysis Software</small></div>
              </div>
              <h1>Work Combination</h1>
              <process-table></process-table>
          </div>
          <div class="canvas">
              <result-card heading="Analysis Results">
                  <table>
                      <tr><th>Total cycle time in Minutes</th><td>38</td></tr>
                      <tr><th>Value Add Percentage</th><td>44,74%</td></tr>
                  </table>
              </result-card>
              <result-card heading="Conclusion">⇒ Current process is not capable of meeting customer demand</result-card>
              <takt-chart></takt-chart>
              <div class="cell"></div>
          </div>
      </div>
      <scroll-bar vertical></scroll-bar>`;
  }
}

class SheetTabs extends BaseElement {
  render() {
    return `
      <style>
          ${controls}
          :host { display: grid; grid-template-columns: 925fr 995fr; height: 40px; box-sizing: border-box; border-top: 1px solid #dcdcdc; font-size: 16px; }
          .tabs { display: flex; align-items: flex-start; white-space: nowrap; }
          .tabs button { height: 38px; }
          .prev { margin-left: 32px; width: 8px; }
          .next { margin-left: 32px; width: 8px; }
          .problem { margin: 0 16px 0 72px; }
          .tabs i { width: 1px; height: 24px; margin-top: 7px; background: #c8c8c8; }
          .tabs .active {
              align-items: flex-start;
              box-sizing: border-box;
              height: 36px;
              margin: -1px 4px 0 5px;
              padding: 4px 10px 0;
              border: 1px solid #dcdcdc;
              border-top: 0;
              border-radius: 0 0 5px 5px;
              background: #fff;
              font-size: 17px;
              font-weight: 600;
          }
          .active span { line-height: 26px; border-bottom: 2px solid var(--color-green); }
          .add { margin-left: 52px; }
          .bar { display: flex; align-items: center; gap: 19px; padding-right: 25px; }
          scroll-bar { flex: 1; }
      </style>
      <div class="tabs">
          <button class="prev" aria-label="Previous sheet"><ui-icon name="prev"></ui-icon></button>
          <button class="next" aria-label="Next sheet"><ui-icon name="next"></ui-icon></button>
          <button class="problem">Problem</button>
          <i></i>
          <button class="active"><span>Work Combination (2)</span></button>
          <i></i>
          <button class="add" aria-label="New sheet"><ui-icon name="plus"></ui-icon></button>
      </div>
      <div class="bar">
          <ui-icon name="dots"></ui-icon>
          <scroll-bar></scroll-bar>
      </div>`;
  }
}

class StatusBar extends BaseElement {
  render() {
    return `
      <style>
          ${controls}
          :host {
              display: flex;
              align-items: center;
              box-sizing: border-box;
              height: 27px;
              padding: 0 18px 0 15px;
              border-top: 1px solid #fff;
              background: #f5f5f5;
              font-size: 12px;
          }
          .check { gap: 2px; margin-left: 26px; font-size: 13px; font-weight: 600; }
          .views { display: flex; margin-left: auto; height: 100%; }
          .views button { width: 50px; height: 100%; }
          .views .on { background: #e0e0e0; }
          .zoom { display: flex; align-items: center; gap: 6px; margin: 0 16px 0 8px; }
          .zoom button { width: 10px; font-size: 16px; line-height: 20px; }
          input {
              appearance: none;
              width: 124px;
              height: 14px;
              background:
                  linear-gradient(#616161, #616161) 0 50% / 100% 1px no-repeat,
                  linear-gradient(#616161, #616161) 50% 50% / 1px 7px no-repeat;
          }
          input::-webkit-slider-thumb { appearance: none; width: 6px; height: 14px; background: #616161; }
      </style>
      <span>Ready</span>
      <button class="check"><ui-icon name="access"></ui-icon>Accessibility: Investigate</button>
      <div class="views">
          <button class="on" aria-label="Normal"><ui-icon name="viewNormal"></ui-icon></button>
          <button aria-label="Page layout"><ui-icon name="viewLayout"></ui-icon></button>
          <button aria-label="Page break preview"><ui-icon name="viewBreak"></ui-icon></button>
      </div>
      <div class="zoom">
          <button aria-label="Zoom out">−</button>
          <input type="range" min="0" max="200" value="72" aria-label="Zoom">
          <button aria-label="Zoom in">+</button>
      </div>
      <span>75%</span>`;
  }
}

customElements.define("ui-icon", UiIcon);
customElements.define("title-bar", TitleBar);
customElements.define("ribbon-tabs", RibbonTabs);
customElements.define("ribbon-button", RibbonButton);
customElements.define("ribbon-group", RibbonGroup);
customElements.define("ribbon-bar", RibbonBar);
customElements.define("formula-bar", FormulaBar);
customElements.define("process-table", ProcessTable);
customElements.define("result-card", ResultCard);
customElements.define("takt-chart", TaktChart);
customElements.define("scroll-bar", ScrollBar);
customElements.define("work-sheet", WorkSheet);
customElements.define("sheet-tabs", SheetTabs);
customElements.define("status-bar", StatusBar);
</script>
</body>
</html>
